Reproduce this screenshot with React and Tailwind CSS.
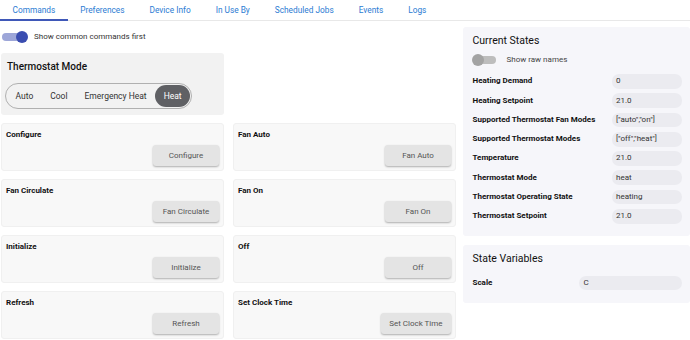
import React from "react";

const tabs = ["Commands", "Preferences", "Device Info", "In Use By", "Scheduled Jobs", "Events", "Logs"];
const commands = [
  "Configure", "Fan Auto",
  "Fan Circulate", "Fan On",
  "Initialize", "Off",
  "Refresh", "Set Clock Time",
];
const states = [
  ["Heating Demand", "0"],
  ["Heating Setpoint", "21.0"],
  ["Supported Thermostat Fan Modes", '["auto","on"]'],
  ["Supported Thermostat Modes", '["off","heat"]'],
  ["Temperature", "21.0"],
  ["Thermostat Mode", "heat"],
  ["Thermostat Operating State", "heating"],
  ["Thermostat Setpoint", "21.0"],
];
const modes = ["Auto", "Cool", "Emergency Heat", "Heat"];

export default function App() {
  return (
    <div className="w-[690px] h-[340px] overflow-hidden bg-white text-[#222] font-['Roboto','Liberation_Sans',sans-serif]">
      <div className="flex h-[21px] border-b border-[#e8e8e8]">
        {tabs.map((t, i) => (
          <div
            key={t}
            className={
              "px-[12.5px] h-[21px] flex items-center text-[8.3px] text-[#2b7bd3] " +
              (i === 0 ? "border-b-2 border-[#3f58b8] pt-[1px]" : "pb-[1px]")
            }
          >
            {t}
          </div>
        ))}
      </div>
      <div className="flex">
        <div className="w-[457px] pl-[1px] shrink-0">
          <div className="flex items-center h-[14px] mt-[9px]">
            <div className="relative w-[24px] h-[8px] rounded-full bg-[#9da6d8] ml-[1px]">
              <div className="absolute right-[-2px] top-[-2px] w-[12px] h-[12px] rounded-full bg-[#3a4db0]" />
            </div>
            <span className="ml-[8px] text-[8px] text-[#333]">Show common commands first</span>
          </div>
          <div className="mt-[9px] w-[223px] h-[62px] rounded-[3px] bg-[#f2f2f2] px-[4px] pt-[8px]">
            <div className="ml-[2px] text-[10px] leading-[12px] font-medium text-[#111]">Thermostat Mode</div>
            <div className="mt-[10px] inline-flex h-[26px] items-center rounded-full border border-[#b0b0b0] p-[1px]">
              {modes.map((m) => (
                <div
                  key={m}
                  className={
                    "h-[22px] px-[8.5px] flex items-center rounded-full text-[8.5px] " +
                    (m === "Heat" ? "bg-[#5f6064] text-white" : "text-[#333]")
                  }
                >
                  {m}
                </div>
              ))}
            </div>
          </div>
          <div className="mt-[8px] grid grid-cols-2 gap-x-[9px] gap-y-[8px] w-[455px]">
            {commands.map((c) => (
              <div
                key={c}
                className="h-[48px] flex flex-col rounded-[3px] border border-[#f0f0f0] bg-[#f8f8f8]"
              >
                <div className="pl-[4px] pt-[6px] text-[8px] leading-[10px] font-bold text-[#111]">{c}</div>
                <button className="mt-auto mb-[4px] mr-[4px] self-end h-[21px] min-w-[66px] px-[8.5px] rounded-[3px] bg-[#e4e4e4] shadow-[0_1px_2px_rgba(0,0,0,0.3)] text-[8px] text-[#555]">
                  {c}
                </button>
              </div>
            ))}
          </div>
        </div>
        <div className="ml-[6px] w-[227px] shrink-0">
          <div className="mt-[6px] rounded-[3px] bg-[#f6f6fa] pl-[9.5px] pr-[8px] pt-[8px] pb-[12px]">
            <div className="text-[10.5px] leading-[12px] text-[#111]">Current States</div>
            <div className="mt-[6px] flex items-center h-[14px]">
              <div className="relative w-[23px] h-[8px] rounded-full bg-[#bdbdbd]">
                <div className="absolute left-[-1px] top-[-2px] w-[12px] h-[12px] rounded-full bg-[#a3a3a3]" />
              </div>
              <span className="ml-[11px] text-[8px] text-[#444]">Show raw names</span>
            </div>
            <div className="mt-[7px] flex flex-col gap-[4.6px]">
              {states.map(([k, v]) => (
                <div key={k} className="flex items-center h-[14.7px]">
                  <div className="flex-1 text-[8px] font-bold text-[#111] whitespace-nowrap">{k}</div>
                  <div className="w-[70.5px] h-[14.7px] rounded-[7px] bg-[#ebebf0] px-[4.5px] flex items-center text-[8px] text-[#333] whitespace-nowrap">
                    {v}
                  </div>
                </div>
              ))}
            </div>
          </div>
          <div className="mt-[9.3px] rounded-[3px] bg-[#f6f6fa] pl-[9.5px] pr-[8px] pt-[8px] pb-[12.6px]">
            <div className="text-[10.5px] leading-[12px] text-[#111]">State Variables</div>
            <div className="mt-[10.7px] flex items-center h-[14.7px]">
              <div className="flex-1 text-[8px] font-bold text-[#111]">Scale</div>
              <div className="w-[103px] h-[14.7px] rounded-[7px] bg-[#ebebf0] px-[4.5px] flex items-center text-[8px] text-[#333]">
                C
              </div>
            </div>
          </div>
        </div>
      </div>
    </div>
  );
}
